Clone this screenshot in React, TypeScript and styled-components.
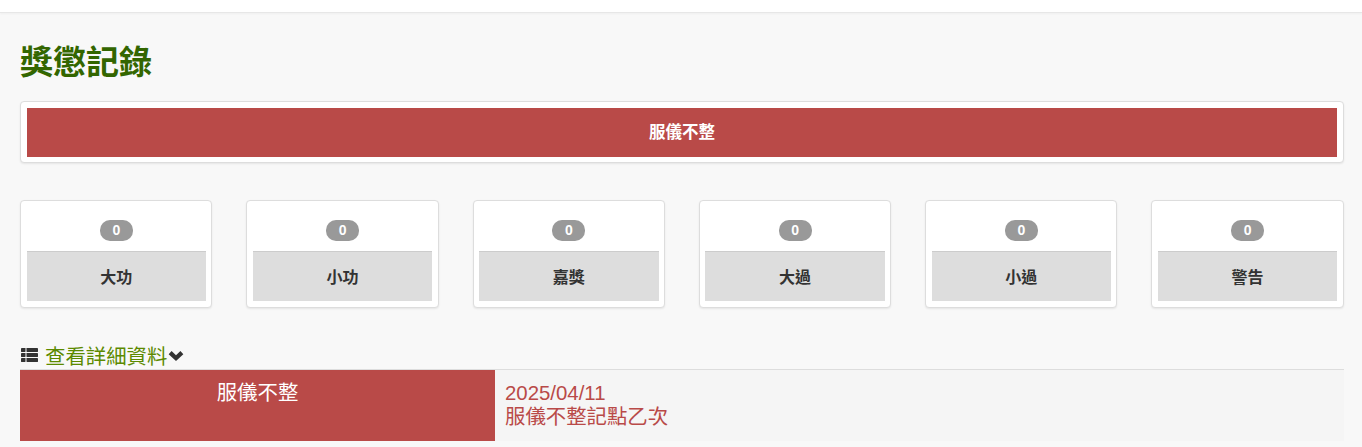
import React from "react";
import styled, { createGlobalStyle } from "styled-components";

const Global = createGlobalStyle`
  html, body { margin: 0; padding: 0; }
  body {
    background: #f8f8f8;
    font-family: "Liberation Sans", "Noto Sans CJK TC", Arial, sans-serif;
    color: #333;
    height: 447px;
    overflow: hidden;
  }
`;

const TopBar = styled.header`
  height: 12px;
  background: #fff;
  border-bottom: 1px solid #e7e7e7;
  box-shadow: 0 1px 2px rgba(0, 0, 0, 0.04);
`;

const Main = styled.main`
  padding: 0 18.5px 0 20px;
`;

const Title = styled.h1`
  margin: 30px 0 0;
  height: 58px;
  font-size: 33px;
  line-height: 40px;
  font-weight: 700;
  color: #336600;
`;

const Panel = styled.section`
  box-sizing: border-box;
  background: #fff;
  border: 1px solid #ddd;
  border-radius: 4px;
  padding: 6px 5.2px 5px 5.6px;
  box-shadow: 0 1px 2px rgba(0, 0, 0, 0.08);
`;

const Banner = styled.div`
  height: 49px;
  background: #b94a48;
  color: #fff;
  font-size: 16.5px;
  font-weight: 700;
  padding-bottom: 3px;
  box-sizing: border-box;
  display: flex;
  align-items: center;
  justify-content: center;
`;

const Stats = styled.div`
  display: grid;
  grid-template-columns: repeat(6, 1fr);
  column-gap: 34px;
  margin-top: 37px;
`;

const StatCard = styled(Panel)`
  height: 108px;
  padding-top: 19px;
  padding-bottom: 6px;
  display: flex;
  flex-direction: column;
  align-items: stretch;
`;

const Badge = styled.span`
  align-self: center;
  width: 33px;
  height: 21px;
  border-radius: 10px;
  background: #999;
  color: #fff;
  font-size: 14px;
  font-weight: 700;
  line-height: 20px;
  text-align: center;
`;

const StatLabel = styled.div`
  margin-top: 10px;
  height: 50px;
  background: #ddd;
  border-top: 1px solid #ccc;
  box-sizing: border-box;
  padding-bottom: 1px;
  color: #333;
  font-size: 16px;
  font-weight: 700;
  display: flex;
  align-items: center;
  justify-content: center;
`;

const DetailToggle = styled.div`
  margin-top: 34px;
  height: 27px;
  box-sizing: border-box;
  padding-bottom: 2px;
  display: flex;
  align-items: center;
  font-size: 20.4px;
  color: #5c8a00;
`;

const ListIcon = styled.svg`
  width: 17px;
  height: 14px;
  margin: 0 7px 0 1px;
  fill: #333;
`;

const ChevronIcon = styled.svg`
  width: 16px;
  height: 11px;
  margin: 1px 0 0 1px;
  fill: #333;
`;

const Detail = styled.div`
  display: grid;
  grid-template-columns: 475px 1fr;
  height: 71px;
  border-top: 1px solid #ddd;
  background: #f5f5f5;
`;

const DetailHead = styled.div`
  background: #b94a48;
  color: #fff;
  font-size: 20.4px;
  line-height: 24px;
  padding-top: 11px;
  text-align: center;
`;

const DetailBody = styled.div`
  color: #b94a48;
  font-size: 20.4px;
  line-height: 24px;
  padding: 11px 10px 0;
`;

const Line = styled.div`
  white-space: nowrap;
`;

const stats = ["大功", "小功", "嘉獎", "大過", "小過", "警告"];

export default function App() {
  return (
    <>
      <Global />
      <TopBar />
      <Main>
        <Title>獎懲記錄</Title>
        <Panel>
          <Banner>服儀不整</Banner>
        </Panel>
        <Stats>
          {stats.map((label) => (
            <StatCard key={label}>
              <Badge>0</Badge>
              <StatLabel>{label}</StatLabel>
            </StatCard>
          ))}
        </Stats>
        <DetailToggle>
          <ListIcon viewBox="0 0 17 14" aria-hidden="true">
            <rect x="0" y="0" width="4.5" height="4" rx="0.4" />
            <rect x="5.5" y="0" width="11.5" height="4" rx="0.4" />
            <rect x="0" y="5" width="4.5" height="4" rx="0.4" />
            <rect x="5.5" y="5" width="11.5" height="4" rx="0.4" />
            <rect x="0" y="10" width="4.5" height="4" rx="0.4" />
            <rect x="5.5" y="10" width="11.5" height="4" rx="0.4" />
          </ListIcon>
          查看詳細資料
          <ChevronIcon viewBox="0 0 16 12" aria-hidden="true">
            <path d="M0 4.5 L3.2 1 L8 5.6 L12.8 1 L16 4.5 L8 12 Z" />
          </ChevronIcon>
        </DetailToggle>
        <Detail>
          <DetailHead>服儀不整</DetailHead>
          <DetailBody>
            <Line>2025/04/11</Line>
            <Line>服儀不整記點乙次</Line>
          </DetailBody>
        </Detail>
      </Main>
    </>
  );
}
